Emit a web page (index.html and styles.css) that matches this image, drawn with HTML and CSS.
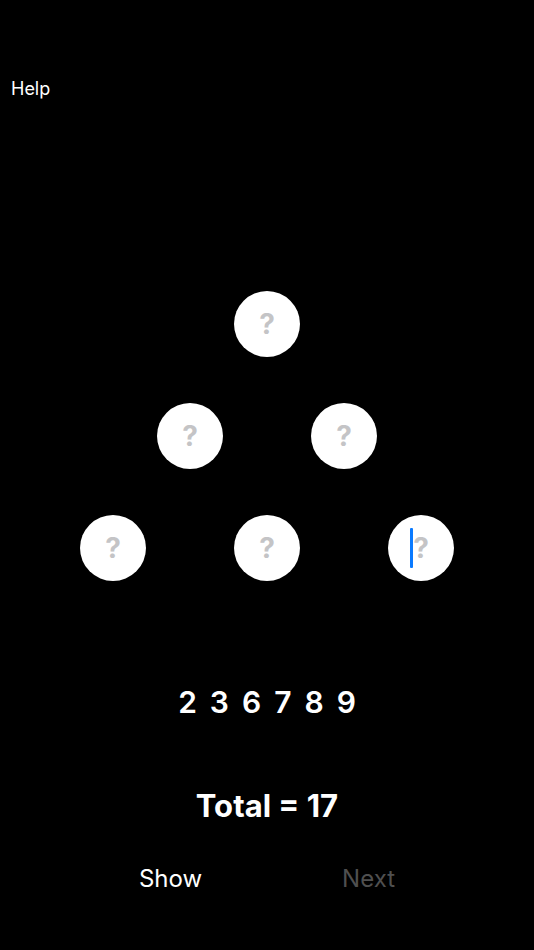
FILE: index.html
```html
<!DOCTYPE html>
<html>
  <head>
    <meta charset="UTF-8">
    <title>Pyramid</title>
    <link rel="stylesheet" href="styles.css">
  </head>
  <body>
    <div class="screen">
      <div class="top">
        <a class="help">Help</a>
      </div>

      <div class="board">
        <div class="row">
          <div class="cell">?</div>
        </div>
        <div class="row">
          <div class="cell">?</div>
          <div class="cell">?</div>
        </div>
        <div class="row">
          <div class="cell">?</div>
          <div class="cell">?</div>
          <div class="cell active">?<span class="caret"></span></div>
        </div>
      </div>

      <div class="digits">
        <span>2</span><span>3</span><span>6</span><span>7</span><span>8</span><span>9</span>
      </div>

      <div class="total">Total = 17</div>

      <div class="actions">
        <button class="btn">Show</button>
        <button class="btn disabled">Next</button>
      </div>
    </div>
  </body>
</html>
```

FILE: styles.css
```css
html, body {
  margin: 0;
  background-color: #000;
}

body {
  font-family: Inter, "Liberation Sans", Arial, sans-serif;
  color: #fff;
}

.screen {
  width: 534px;
  height: 950px;
  display: flex;
  flex-direction: column;
}

.top {
  padding: 78px 0 0 11px;
  height: 22px;
}

.help {
  font-size: 18px;
  line-height: 22px;
  color: #fff;
}

.board {
  margin-top: 191px;
  display: flex;
  flex-direction: column;
  gap: 46px;
}

.row {
  display: flex;
  justify-content: center;
  gap: 88px;
}

.cell {
  position: relative;
  width: 66px;
  height: 66px;
  border-radius: 50%;
  background-color: #fff;
  color: #c4c4c6;
  font-size: 28px;
  font-weight: 700;
  display: flex;
  align-items: center;
  justify-content: center;
}

.caret {
  position: absolute;
  left: 22px;
  top: 13px;
  width: 3px;
  height: 40px;
  border-radius: 1px;
  background-color: #0a7aff;
}

.digits {
  margin-top: 103px;
  display: flex;
  justify-content: center;
  gap: 13px;
  font-size: 30px;
  font-weight: 600;
  line-height: 36px;
}

.total {
  margin-top: 68px;
  text-align: center;
  font-size: 31px;
  font-weight: 700;
  line-height: 36px;
}

.actions {
  margin-top: 40px;
  display: flex;
  justify-content: center;
  gap: 140px;
}

.btn {
  background: none;
  border: none;
  padding: 0;
  font-family: inherit;
  font-size: 24px;
  line-height: 30px;
  color: #fff;
}

.btn.disabled {
  color: #4f4f4f;
}
```
